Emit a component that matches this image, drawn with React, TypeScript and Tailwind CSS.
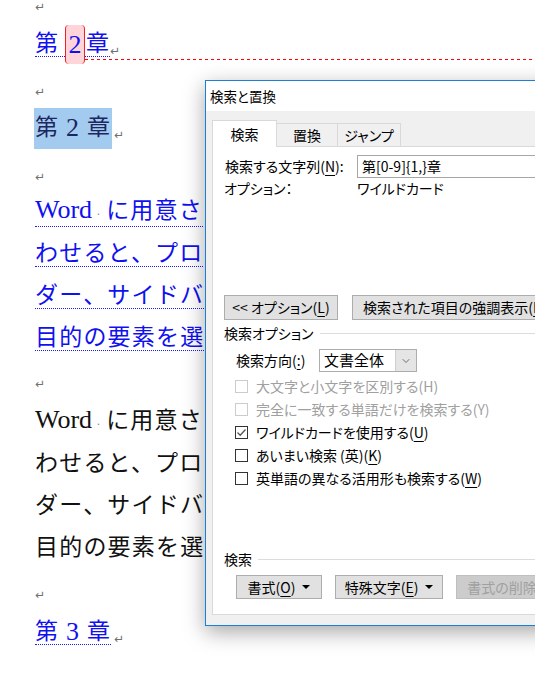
import { ChevronDown } from "lucide-react";
import type { ReactNode } from "react";

function Mark() {
  return <span className="text-[#707070] text-[12px] leading-none font-['DejaVu_Sans',sans-serif]">↵</span>;
}

function U({ children }: { children: ReactNode }) {
  return <span className="underline underline-offset-[3px] decoration-1">{children}</span>;
}

function Tri() {
  return (
    <svg width="8" height="4" viewBox="0 0 8 4" className="ml-[7px]">
      <polygon points="0,0 8,0 4,4" fill="#000" />
    </svg>
  );
}

function Check({ label, checked, disabled }: { label: ReactNode; checked?: boolean; disabled?: boolean }) {
  return (
    <div className="h-[23px] flex items-center pl-[11px]">
      <span
        className={`w-[13px] h-[13px] border bg-white flex items-center justify-center ${
          disabled ? "border-[#cccccc]" : "border-[#333333]"
        }`}
      >
        {checked && (
          <svg width="11" height="11" viewBox="0 0 11 11">
            <polyline points="1.5,5.5 4.2,8.2 9.5,2.5" fill="none" stroke="#555" strokeWidth="1.3" />
          </svg>
        )}
      </span>
      <span className={`ml-[8px] whitespace-nowrap ${disabled ? "text-[#a0a0a0]" : "text-black"}`}>{label}</span>
    </div>
  );
}

function Line({ children, blue }: { children: ReactNode; blue?: boolean }) {
  return (
    <div className="h-[42px] flex items-center whitespace-nowrap">
      <span
        className={`inline-block leading-[24px] ${
          blue ? "text-[#1010f0] border-b border-dotted border-[#1a1aff]" : "text-[#111111]"
        }`}
      >
        {children}
      </span>
    </div>
  );
}

function Chapter({ n, selected }: { n: string; selected?: boolean }) {
  return (
    <div className="h-[42px] flex items-center">
      <span
        className={`h-[41px] flex items-center px-px -ml-px ${
          selected ? "bg-[#a3cbf0] text-[#1c2660]" : "text-[#1010f0]"
        }`}
      >
        <span
          className={`flex items-center leading-[24px] ${
            selected ? "" : "border-b border-dotted border-[#1a1aff]"
          }`}
        >
          <span className="w-[24px]">第</span>
          <span className="w-[28px] text-center text-[26px] font-['Liberation_Serif',serif]">{n}</span>
          <span className="w-[24px]">章</span>
        </span>
      </span>
      <span className="ml-[2px] mt-[8px]">
        <Mark />
      </span>
    </div>
  );
}

export default function App() {
  return (
    <div className="relative w-[535px] h-[674px] overflow-hidden bg-white">
      {/* document */}
      <div className="flex flex-col pl-[35px] text-[23px] tracking-[1.2px] font-['Liberation_Serif','Noto_Sans_CJK_JP',serif]">
        <div className="h-[14px] flex items-center">
          <Mark />
        </div>

        <div className="mt-[9px] h-[42px] relative flex items-center text-[#1010f0]">
          <span className="w-[30px] leading-[24px] border-b border-dotted border-[#1a1aff]">第</span>
          <span className="w-[20px] h-[39px] flex items-center justify-center bg-[#ffd5d9] border-x border-[#ee2222] rounded-[4px] text-[26px] tracking-normal">
            2
          </span>
          <span className="w-[25px] pl-px leading-[24px] border-b border-dotted border-[#1a1aff]">章</span>
          <span className="mt-[8px]">
            <Mark />
          </span>
          <div className="absolute left-[50px] right-0 top-[36px] h-px bg-[repeating-linear-gradient(90deg,#ff0000_0_3px,transparent_3px_6px)]" />
        </div>

        <div className="mt-[17px] h-[20px] flex items-center">
          <Mark />
        </div>
        <div className="mt-[5px]">
          <Chapter n="2" selected />
        </div>
        <div className="mt-[18px] h-[20px] flex items-center">
          <Mark />
        </div>

        <div className="mt-[4px]">
          <Line blue>
            <span className="text-[26px] tracking-normal">Word</span>
            <span className="inline-block w-[14px] text-center text-[#888] text-[12px]">·</span>
            に用意さ
          </Line>
          <Line blue>わせると、プロ</Line>
          <Line blue>ダー、サイドバ</Line>
          <Line blue>目的の要素を選</Line>
        </div>

        <div className="mt-[15px] h-[20px] flex items-center">
          <Mark />
        </div>

        <div className="mt-[7px]">
          <Line>
            <span className="text-[26px] tracking-normal">Word</span>
            <span className="inline-block w-[14px] text-center text-[#888] text-[12px]">·</span>
            に用意さ
          </Line>
          <Line>わせると、プロ</Line>
          <Line>ダー、サイドバ</Line>
          <Line>目的の要素を選</Line>
        </div>

        <div className="mt-[16px] h-[20px] flex items-center">
          <Mark />
        </div>
        <div className="mt-[6px]">
          <Chapter n="3" />
        </div>
      </div>

      {/* find & replace dialog */}
      <div className="absolute left-[205px] top-[80px] w-[400px] h-[546px] border border-[#1c7fd6] bg-[#f0f0f0] shadow-[0_6px_20px_rgba(0,0,0,0.35)] flex flex-col text-[14px] text-black font-['Noto_Sans_CJK_JP',sans-serif] [font-feature-settings:'palt']">
        <div className="h-[30px] bg-white flex items-center pl-[4px] text-[13.5px]">検索と置換</div>
        <div className="pt-[9px] pl-[6px]">
          <div className="flex items-end h-[26px]">
            <div className="relative z-10 -mb-px h-[27px] w-[65px] bg-white border border-b-0 border-[#d9d9d9] flex items-center justify-center">
              検索
            </div>
            <div className="h-[23px] w-[61px] bg-[#f0f0f0] border border-b-0 border-l-0 border-[#d9d9d9] flex items-center justify-center">
              置換
            </div>
            <div className="h-[23px] w-[63px] bg-[#f0f0f0] border border-b-0 border-l-0 border-[#d9d9d9] flex items-center justify-center">
              ジャンプ
            </div>
          </div>

          <div className="h-[469px] bg-white border border-[#d9d9d9] pl-[11px] pt-[8px] flex flex-col">
            <div className="h-[23px] flex items-center">
              <div className="w-[133px] pl-px whitespace-nowrap">
                検索する文字列(<U>N</U>):
              </div>
              <div className="flex-1 h-[23px] border border-[#a6a6a6] bg-white flex items-center pl-[4px]">
                {"第[0-9]{1,}章"}
              </div>
            </div>
            <div className="h-[20px] flex items-center">
              <div className="w-[133px]">オプション：</div>
              <div>ワイルドカード</div>
            </div>

            <div className="mt-[97px] h-[25px] flex gap-[14px]">
              <button className="w-[114px] h-[25px] bg-[#e1e1e1] border border-[#adadad] flex items-center justify-center whitespace-nowrap">
                {"<< "}オプション(<U>L</U>)
              </button>
              <button className="w-[220px] h-[25px] bg-[#e1e1e1] border border-[#adadad] flex items-center pl-[10px] whitespace-nowrap">
                検索された項目の強調表示(<U>R</U>)
              </button>
            </div>

            <div className="h-[26px] flex items-center">
              <span>検索オプション</span>
              <div className="flex-1 ml-[6px] border-t border-[#dcdcdc]" />
            </div>

            <div className="mt-[3px] h-[23px] flex items-center pl-[12px]">
              <div className="w-[83px]">
                検索方向(<U>:</U>)
              </div>
              <div className="w-[98px] h-[23px] border border-[#adadad] bg-white flex">
                <div className="flex-1 flex items-center pl-[4px] text-[15px]">文書全体</div>
                <div className="w-[21px] bg-[#e5e5e5] border-l border-[#cfcfcf] flex items-center justify-center">
                  <ChevronDown size={12} strokeWidth={1.5} color="#444" />
                </div>
              </div>
            </div>

            <div className="mt-[3px] flex flex-col">
              <Check disabled label="大文字と小文字を区別する(H)" />
              <Check disabled label="完全に一致する単語だけを検索する(Y)" />
              <Check checked label={<>ワイルドカードを使用する(<U>U</U>)</>} />
              <Check label={<>あいまい検索 (英)(<U>K</U>)</>} />
              <Check label={<>英単語の異なる活用形も検索する(<U>W</U>)</>} />
            </div>

            <div className="mt-[56px] h-[26px] flex items-center">
              <span>検索</span>
              <div className="flex-1 ml-[6px] border-t border-[#dcdcdc]" />
            </div>

            <div className="mt-[3px] h-[24px] flex gap-[13px] pl-[12px]">
              <button className="w-[86px] h-[24px] bg-[#e1e1e1] border border-[#adadad] flex items-center justify-center whitespace-nowrap">
                書式(<U>O</U>)
                <Tri />
              </button>
              <button className="w-[108px] h-[24px] bg-[#e1e1e1] border border-[#adadad] flex items-center justify-center whitespace-nowrap">
                特殊文字(<U>E</U>)
                <Tri />
              </button>
              <button className="w-[110px] h-[24px] bg-[#cccccc] border border-[#bfbfbf] text-[#a0a0a0] flex items-center justify-center whitespace-nowrap">
                書式の削除(T)
              </button>
            </div>
          </div>
        </div>
      </div>
    </div>
  );
}
